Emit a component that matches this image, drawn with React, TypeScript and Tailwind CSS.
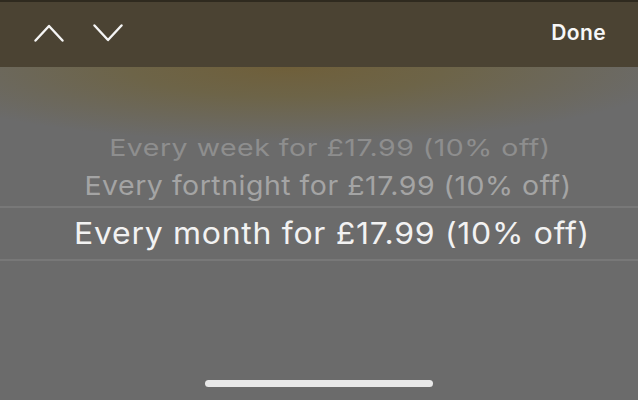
export default function App() {
  return (
    <div
      className="w-[638px] h-[400px] overflow-hidden flex flex-col bg-[#6b6b6b] text-white"
      style={{ fontFamily: 'Inter, Roboto, "Noto Sans", sans-serif' }}
    >
      <div className="h-[67px] shrink-0 bg-[#4b4333] border-t-2 border-[#2f2a1f] flex items-center pl-[34px] pr-[32px]">
        <svg width="30" height="18" viewBox="0 0 30 18" className="mt-[-4px]">
          <path d="M1.5 16.5 L15 2 L28.5 16.5" fill="none" stroke="#f5f5f5" strokeWidth="2.4" strokeLinecap="round" strokeLinejoin="round" />
        </svg>
        <svg width="30" height="18" viewBox="0 0 30 18" className="ml-[29px] mt-[-4px]">
          <path d="M1.5 1.5 L15 16 L28.5 1.5" fill="none" stroke="#f5f5f5" strokeWidth="2.4" strokeLinecap="round" strokeLinejoin="round" />
        </svg>
        <div className="ml-auto text-[21px] tracking-[0.4px] font-semibold text-[#f7f7f7] mt-[-3px]">Done</div>
      </div>
      <div className="flex-1 flex flex-col bg-[radial-gradient(ellipse_62%_75px_at_45%_0%,#6f5f3a_0%,#6d6448_40%,rgba(107,107,107,0)_100%)]">
        <div className="h-[62px] shrink-0" />
        <div className="h-[38px] shrink-0 flex items-center justify-center pl-[22px]">
          <span className="text-[28.5px] tracking-[0.5px] text-[#8e8e8e] leading-none scale-y-[0.81] whitespace-nowrap">Every week for £17.99 (10% off)</span>
        </div>
        <div className="h-[39px] shrink-0 flex items-center justify-center pl-[18px]">
          <span className="text-[28.5px] tracking-[0.5px] text-[#a4a4a4] leading-none scale-y-[0.92] whitespace-nowrap">Every fortnight for £17.99 (10% off)</span>
        </div>
        <div className="h-[55px] shrink-0 border-y-2 border-[#787878] flex items-center justify-center pl-[26px]">
          <span className="text-[32px] tracking-[0.7px] text-[#f2f2f2] leading-none scale-y-[0.93] whitespace-nowrap">Every month for £17.99 (10% off)</span>
        </div>
        <div className="flex-1" />
        <div className="flex justify-center pb-[13px]">
          <div className="w-[228px] h-[7px] rounded-full bg-[#e8e8e8]" />
        </div>
      </div>
    </div>
  );
}
